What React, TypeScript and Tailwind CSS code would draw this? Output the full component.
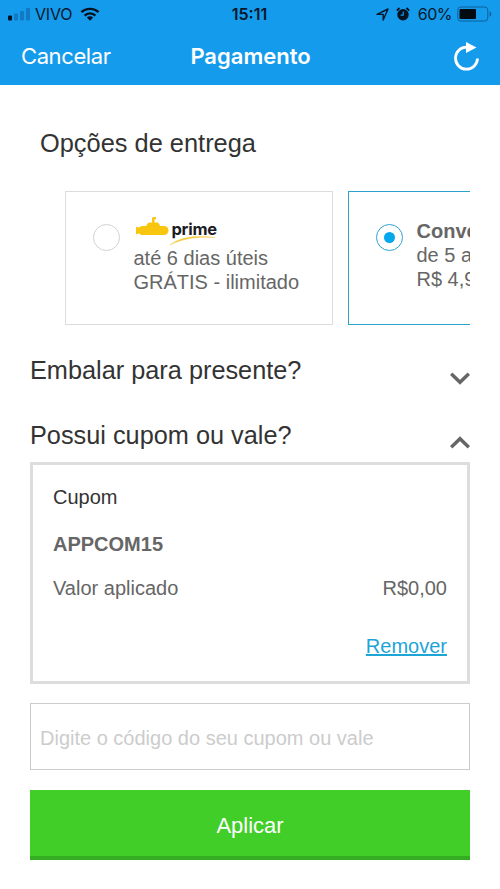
import { useState } from 'react';
import type { ReactNode } from 'react';

const StatusBar = () => (
  <div className="flex h-7 items-center justify-between pl-2 pr-[7px] text-[#06182b]">
    <div className="flex flex-1 items-center">
      <svg width="23" height="13" viewBox="0 0 23 13">
        <rect x="0" y="7.5" width="4" height="5" rx="1" fill="#04111f" />
        <rect x="6" y="5.5" width="4" height="7" rx="1" fill="#117ac2" />
        <rect x="12" y="3" width="4" height="9.5" rx="1" fill="#117ac2" />
        <rect x="18" y="0" width="4" height="12.5" rx="1" fill="#117ac2" />
      </svg>
      <span className="ml-1 text-[16px] tracking-[-0.2px]">VIVO</span>
      <svg className="ml-2" width="20" height="14" viewBox="0 0 20 14" fill="none" stroke="#04111f">
        <path d="M1.500 5.200C6 .7 14 .7 18.500 5.200" strokeWidth="2.400" />
        <path d="M4.600 8.600c3-3 7.800-3 10.800 0" strokeWidth="2.400" />
        <path d="M10 13.800l-3.200-3.200c1.800-1.700 4.600-1.700 6.400 0z" fill="#04111f" stroke="none" />
      </svg>
    </div>
    <span className="relative -left-px text-[16px] font-semibold">15:11</span>
    <div className="flex flex-1 items-center justify-end">
      <svg width="13" height="13" viewBox="0 0 13 13" fill="none" stroke="#06182b" strokeWidth="1.4" strokeLinejoin="round">
        <path d="M1 6.400L12 1 7.200 12V6.400z" />
      </svg>
      <svg className="ml-[7px]" width="14" height="14" viewBox="0 0 14 14">
        <circle cx="7" cy="7.8" r="5.7" fill="#04111f" />
        <path d="M.8 3.600L3.500 1M13.200 3.600L10.500 1" stroke="#04111f" strokeWidth="1.8" />
        <path d="M7.200 4.500v3.700H4.600" fill="none" stroke="#159bec" strokeWidth="1.2" />
      </svg>
      <span className="ml-2 text-[16px] tracking-[-0.5px]">60%</span>
      <svg className="ml-[5px]" width="36" height="16" viewBox="0 0 36 16">
        <rect x=".8" y="1" width="30" height="14" rx="3" fill="none" stroke="#0d6099" strokeWidth="1" />
        <rect x="2.5" y="3" width="16.5" height="10" rx="1" fill="#020a12" />
        <path d="M32.600 5.400c2.300.8 2.300 4.400 0 5.200z" fill="#0d6099" />
      </svg>
    </div>
  </div>
);

const PrimeLogo = () => (
  <div className="flex h-[30px] w-[84px]">
    <svg width="84" height="30" viewBox="0 0 84 30">
      <g fill="#f8c50f">
        <rect x="4" y="10" width="30.500" height="9" rx="4.500" />
        <path d="M2 10.500l6 2.500v3l-6 2.500z" />
        <path d="M12 10.500q1-3.500 3-4h8.500q2 .5 2.500 4z" />
        <path d="M18 7V2.500q0-1.500 1.500-1.500H22v2.200h-1.500V7z" />
      </g>
      <path d="M36 29C46 21 61 19 81 21.500 62 20.500 49 22.500 36 29z" fill="#f3cb3a" stroke="#f3cb3a" strokeWidth=".4" />
      <text x="37.500" y="19" fontSize="16.500" fontWeight="700" fill="#1c1c24" textLength="45.500" fontFamily="Inter, sans-serif">
        prime
      </text>
    </svg>
  </div>
);

interface OptionProps {
  selected: boolean;
  onSelect: () => void;
  children: ReactNode;
}

const DeliveryOption = ({ selected, onSelect, children }: OptionProps) => (
  <button
    type="button"
    onClick={onSelect}
    className={`flex h-[134px] w-[268px] shrink-0 border-[1.5px] pl-[27px] pt-6 text-left text-[20px] leading-6 text-[#666] ${selected ? 'border-[#2ba3cd]' : 'border-[#dcdcdc]'}`}
  >
    <span
      className={`mt-2 flex size-[27px] shrink-0 items-center justify-center rounded-full border-[1.5px] ${selected ? 'border-[#2ba3cd]' : 'border-[#d2d2d2]'}`}
    >
      {selected && <span className="size-[11px] rounded-full bg-[#06a7ec]" />}
    </span>
    <span className="ml-[13.5px] block whitespace-nowrap">{children}</span>
  </button>
);

const Chevron = ({ open }: { open: boolean }) => (
  <svg className={open ? 'rotate-180' : ''} width="20" height="14" viewBox="0 0 20 14" fill="none" stroke="#666" strokeWidth="3.4">
    <path d="M1.200 2.700L10 11.300l8.800-8.600" />
  </svg>
);

export default function App() {
  const [delivery, setDelivery] = useState('conventional');
  const [giftOpen, setGiftOpen] = useState(false);
  const [couponOpen, setCouponOpen] = useState(true);
  const [code, setCode] = useState('');

  return (
    <div className="h-[889px] w-[500px] overflow-hidden bg-white font-['Liberation_Sans',Arial,sans-serif] text-[#333]">
      <header className="h-[85px] bg-[#159bec] font-[Inter,sans-serif]">
        <StatusBar />
        <div className="flex h-[57px] items-center justify-between pl-[21px] pr-5 text-white">
          <button type="button" className="flex-1 text-left text-[22px] tracking-[-0.4px]">Cancelar</button>
          <h1 className="text-[22px] font-semibold">Pagamento</h1>
          <div className="flex flex-1 justify-end">
            <svg width="27" height="30" viewBox="0 0 27 30">
              <path d="M14 5.200A11 11 0 1 0 24.500 16.500" fill="none" stroke="white" strokeWidth="2.800" />
              <path d="M13 0l10.500 5.500L13 11z" fill="white" />
            </svg>
          </div>
        </div>
      </header>

      <main className="px-[30px]">
        <h2 className="pl-[10px] pt-[43px] text-[25.4px] leading-[30px]">Opções de entrega</h2>

        <div className="mt-[33px] flex gap-[15px] overflow-hidden pl-[35px]">
          <DeliveryOption selected={delivery === 'prime'} onSelect={() => setDelivery('prime')}>
            <PrimeLogo />
            <span className="block">até 6 dias úteis</span>
            <span className="block">GRÁTIS - ilimitado</span>
          </DeliveryOption>
          <DeliveryOption selected={delivery === 'conventional'} onSelect={() => setDelivery('conventional')}>
            <strong className="mt-[3px] block">Convencional</strong>
            <span className="block">de 5 a 8 dias úteis</span>
            <span className="block">R$ 4,99</span>
          </DeliveryOption>
        </div>

        <button type="button" onClick={() => setGiftOpen(!giftOpen)} className="mt-[30px] flex h-[30px] w-full items-start justify-between text-[25.3px] leading-[30px]">
          Embalar para presente?
          <span className="mt-4"><Chevron open={giftOpen} /></span>
        </button>
        <button type="button" onClick={() => setCouponOpen(!couponOpen)} className="mt-[35px] flex h-[30px] w-full items-start justify-between text-[25.3px] leading-[30px]">
          Possui cupom ou vale?
          <span className="mt-4"><Chevron open={couponOpen} /></span>
        </button>

        {couponOpen && (
          <>
            <section className="mt-3 h-[222px] border-[3px] border-[#ddd] px-5 pt-5 text-[20px] leading-6 text-[#666]">
              <h3 className="text-[#333]">Cupom</h3>
              <p className="mt-[23px] font-bold">APPCOM15</p>
              <div className="mt-5 flex justify-between">
                <span>Valor aplicado</span>
                <span>R$0,00</span>
              </div>
              <div className="mt-[34px] flex justify-end">
                <button type="button" className="text-[#1da5d6] underline">Remover</button>
              </div>
            </section>

            <input
              value={code}
              onChange={(e) => setCode(e.target.value)}
              placeholder="Digite o código do seu cupom ou vale"
              className="mt-[19px] block h-[67px] w-full border-[1.5px] border-[#ccc] px-[9px] pt-[3px] text-[20px] placeholder:text-[#ccc] focus:outline-none"
            />
            <button type="button" className="mt-5 block h-[70px] w-full border-b-4 border-[#34ad22] bg-[#41ce29] pt-1 text-[22px] text-white">
              Aplicar
            </button>
          </>
        )}
      </main>
    </div>
  );
}
